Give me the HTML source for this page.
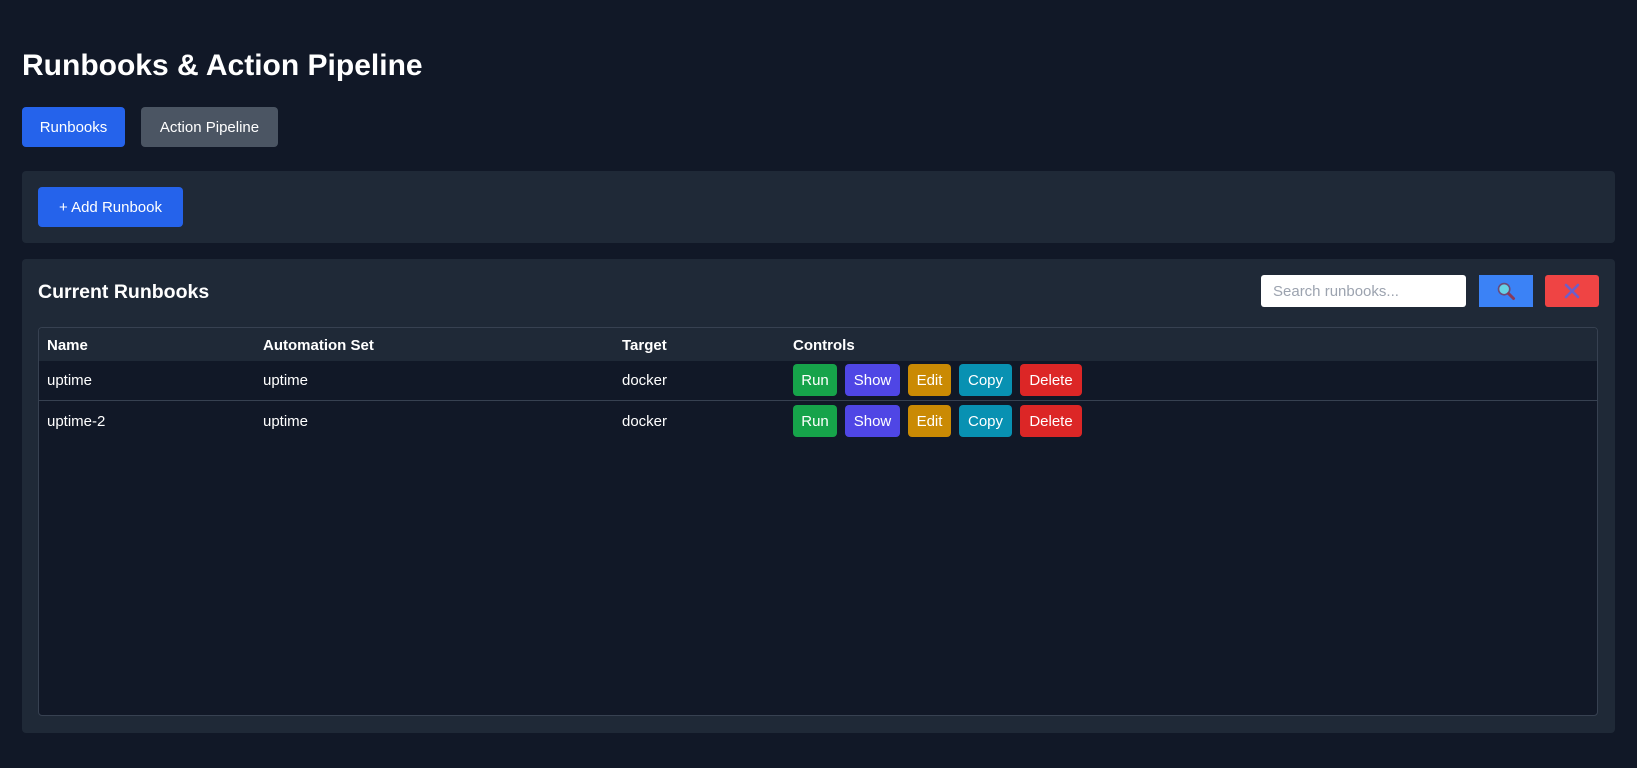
<!DOCTYPE html>
<html><head><style>
*{box-sizing:border-box;margin:0;padding:0}
body{width:1637px;height:768px;background:#111827;font-family:"Liberation Sans",sans-serif;color:#fff;position:relative;overflow:hidden}
.a{position:absolute}
h1{position:absolute;left:22px;top:49px;font-size:30px;font-weight:bold;letter-spacing:0px}
.btn{position:absolute;display:flex;align-items:center;justify-content:center;border-radius:4px;font-size:15px;color:#fff}
.panel{position:absolute;left:22px;width:1593px;background:#1f2937;border-radius:4px}
.th{position:absolute;top:337px;font-size:15px;font-weight:bold}
.td{position:absolute;font-size:15px}
.sb{position:absolute;height:32px;border-radius:4px;display:flex;align-items:center;justify-content:center;font-size:15px;color:#fff}
</style></head><body>
<h1>Runbooks &amp; Action Pipeline</h1>
<div class="btn" style="left:22px;top:107px;width:103px;height:40px;background:#2563eb">Runbooks</div>
<div class="btn" style="left:141px;top:107px;width:137px;height:40px;background:#4b5563">Action Pipeline</div>
<div class="panel" style="top:171px;height:72px"></div>
<div class="btn" style="left:38px;top:187px;width:145px;height:40px;background:#2563eb">+ Add Runbook</div>
<div class="panel" style="top:259px;height:474px"></div>
<div class="a" style="left:38px;top:281px;font-size:19.5px;font-weight:bold">Current Runbooks</div>
<div class="a" style="left:1261px;top:275px;width:205px;height:32px;background:#fff;border-radius:3px;color:#9ca3af;font-size:15px;padding:8px 12px">Search runbooks...</div>
<div class="a" style="left:1479px;top:275px;width:54px;height:32px;background:#3b82f6;display:flex;align-items:center;justify-content:center">
<svg width="20" height="20" viewBox="0 0 16 16"><circle cx="6.5" cy="6.5" r="4.5" fill="#67d3e6" stroke="#6b4a7a" stroke-width="1.3"/><line x1="10" y1="10" x2="14" y2="14" stroke="#8a3a5a" stroke-width="2.4" stroke-linecap="round"/></svg></div>
<div class="a" style="left:1545px;top:275px;width:54px;height:32px;background:#ef4444;border-radius:3px;display:flex;align-items:center;justify-content:center">
<svg width="18" height="18" viewBox="0 0 18 18"><path d="M3 3L15 15M15 3L3 15" stroke="#6d5fc9" stroke-width="2.6" stroke-linecap="round"/></svg></div>
<div class="a" style="left:38px;top:327px;width:1560px;height:389px;background:#111827;border:1px solid #374151;border-radius:4px;overflow:hidden">
<div style="height:33px;background:#1f2937"></div>
<div style="position:absolute;top:72px;left:0;right:0;height:1px;background:#374151"></div>
</div>
<div class="th" style="left:47px">Name</div>
<div class="th" style="left:263px">Automation Set</div>
<div class="th" style="left:622px">Target</div>
<div class="th" style="left:793px">Controls</div>
<div class="td" style="left:47px;top:372px">uptime</div>
<div class="td" style="left:263px;top:372px">uptime</div>
<div class="td" style="left:622px;top:372px">docker</div>
<div class="td" style="left:47px;top:413px">uptime-2</div>
<div class="td" style="left:263px;top:413px">uptime</div>
<div class="td" style="left:622px;top:413px">docker</div>
<div class="sb" style="left:793px;top:364px;width:44px;background:#16a34a">Run</div>
<div class="sb" style="left:845px;top:364px;width:55px;background:#4f46e5">Show</div>
<div class="sb" style="left:908px;top:364px;width:43px;background:#ca8a04">Edit</div>
<div class="sb" style="left:959px;top:364px;width:53px;background:#0891b2">Copy</div>
<div class="sb" style="left:1020px;top:364px;width:62px;background:#dc2626">Delete</div>
<div class="sb" style="left:793px;top:405px;width:44px;background:#16a34a">Run</div>
<div class="sb" style="left:845px;top:405px;width:55px;background:#4f46e5">Show</div>
<div class="sb" style="left:908px;top:405px;width:43px;background:#ca8a04">Edit</div>
<div class="sb" style="left:959px;top:405px;width:53px;background:#0891b2">Copy</div>
<div class="sb" style="left:1020px;top:405px;width:62px;background:#dc2626">Delete</div>
</body></html>
